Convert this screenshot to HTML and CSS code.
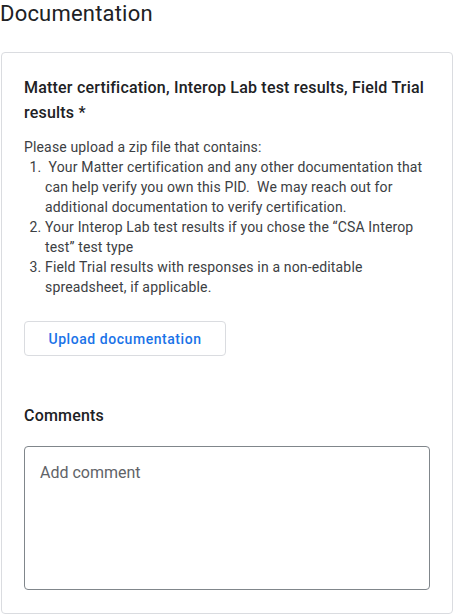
FILE: index.html
```html
<html lang="en">

<head>
  <meta charset="UTF-8">
  <meta name="viewport" content="width=device-width, initial-scale=1.0">
  <link rel="stylesheet" href="styles.css">
</head>

<body>
  <h1 class="page-title">Documentation</h1>
  <div class="card">
    <h2 class="field-title">Matter certification, Interop Lab test results, Field Trial results *</h2>
    <p class="hint">Please upload a zip file that contains:</p>
    <ol class="steps">
      <li>&nbsp;Your Matter certification and any other documentation that can help verify you own this PID.&nbsp; We may reach out for additional documentation to verify certification.</li>
      <li>Your Interop Lab test results if you chose the “CSA Interop test” test type</li>
      <li>Field Trial results with responses in a non-editable spreadsheet, if applicable.</li>
    </ol>
    <button class="upload-btn" type="button">Upload documentation</button>
    <h2 class="comments-title">Comments</h2>
    <textarea class="comment-box" placeholder="Add comment"></textarea>
  </div>
</body>

</html>
```

FILE: styles.css
```css
body {
  margin: 0;
  padding: 0;
  font-family: Roboto, "Liberation Sans", Arial, sans-serif;
  color: #202124;
  background: #fff;
}

.page-title {
  margin: 0;
  font-size: 22px;
  font-weight: 400;
  line-height: 28px;
  letter-spacing: 0.2px;
  color: #202124;
}

.card {
  margin: 24px 1px 0 1px;
  padding: 22px 23px 23px 22px;
  border: 1px solid #dadce0;
  border-radius: 4px;
}

.field-title {
  margin: 0;
  font-size: 16px;
  font-weight: 500;
  line-height: 25px;
  letter-spacing: 0.2px;
  color: #202124;
}

.hint {
  margin: 12px 0 0 0;
  font-size: 14px;
  line-height: 20px;
  letter-spacing: 0.15px;
  color: #3c4043;
}

.steps {
  margin: 0;
  padding-left: 21px;
  font-size: 14px;
  line-height: 20px;
  letter-spacing: 0.15px;
  color: #3c4043;
}

.upload-btn {
  display: block;
  margin-top: 24px;
  width: 202px;
  height: 35px;
  padding: 0;
  border: 1px solid #dadce0;
  border-radius: 4px;
  background: #fff;
  font-family: Roboto, "Liberation Sans", Arial, sans-serif;
  font-size: 14px;
  font-weight: 500;
  letter-spacing: 0.55px;
  color: #1a73e8;
  cursor: pointer;
}

.comments-title {
  margin: 48px 0 0 0;
  font-size: 16px;
  font-weight: 500;
  line-height: 24px;
  letter-spacing: 0.2px;
  color: #202124;
}

.comment-box {
  display: block;
  box-sizing: border-box;
  width: 406px;
  height: 144px;
  margin-top: 18px;
  padding: 14px 15px;
  border: 1px solid #80868b;
  border-radius: 4px;
  font-family: Roboto, "Liberation Sans", Arial, sans-serif;
  font-size: 16px;
  line-height: 24px;
  color: #202124;
  resize: none;
}

.comment-box::placeholder {
  color: #5f6368;
}
```
